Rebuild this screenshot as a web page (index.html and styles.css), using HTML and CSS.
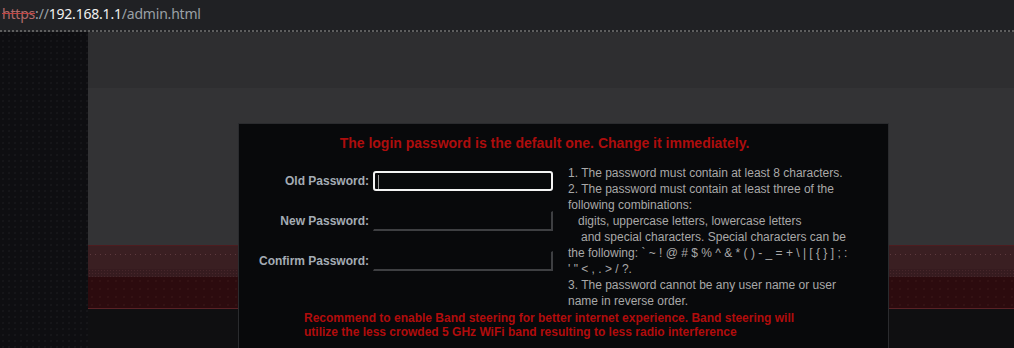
FILE: index.html
```html
<!DOCTYPE html>
<html>
<head>
<meta charset="utf-8">
<link rel="stylesheet" href="styles.css">
</head>
<body>
<div class="urlbar">
  <span class="scheme">https</span><span class="dim">://</span><span class="host">192.168.1.1</span><span class="dim">/admin.html</span>
</div>
<div class="page">
  <div class="sidebar"></div>
  <div class="content">
    <div class="band band-top"></div>
    <div class="band band-mid"></div>
    <div class="band band-red">
      <div class="red-upper"></div>
      <div class="red-dots"></div>
      <div class="red-lower"></div>
    </div>
    <div class="band band-bottom"></div>
  </div>
  <div class="modal">
    <div class="title">The login password is the default one. Change it immediately.</div>
    <div class="form">
      <div class="fields">
        <div class="row">
          <label class="label">Old Password:</label>
          <div class="input focused"><span class="caret"></span></div>
        </div>
        <div class="row">
          <label class="label">New Password:</label>
          <div class="input"></div>
        </div>
        <div class="row">
          <label class="label">Confirm Password:</label>
          <div class="input"></div>
        </div>
      </div>
      <div class="rules">
        1. The password must contain at least 8 characters.<br>
        2. The password must contain at least three of the following combinations:<br>
        <span class="ind1">digits, uppercase letters, lowercase letters</span><br>
        <span class="ind2">and special characters. Special characters can be the following: ` ~ ! @ # $ % ^ &amp; * ( ) - _ = + \ | [ { } ] ; : ' " &lt; , . &gt; / ?.</span><br>
        3. The password cannot be any user name or user name in reverse order.
      </div>
    </div>
    <div class="notice">Recommend to enable Band steering for better internet experience. Band steering will utilize the less crowded 5 GHz WiFi band resulting to less radio interference</div>
  </div>
</div>
</body>
</html>
```
FILE: styles.css
```css
html, body {
  margin: 0;
  padding: 0;
  background: #0f0f12;
  overflow: hidden;
}
body {
  width: 1014px;
  height: 348px;
  font-family: "Liberation Sans", Arial, sans-serif;
}
.urlbar {
  height: 32px;
  background: #202124;
  border-bottom: 2px dotted #5e5e5e;
  box-sizing: border-box;
  padding-left: 2px;
  font-family: "Noto Sans", "Open Sans", sans-serif;
  font-size: 14px;
  line-height: 28px;
  letter-spacing: -0.2px;
  color: #9aa0a6;
  white-space: nowrap;
}
.scheme {
  color: #b36a6a;
  text-decoration: line-through;
  text-decoration-color: #c04040;
}
.host { color: #f0f0f0; }
.dim { color: #9aa0a6; }

.page {
  position: relative;
  display: flex;
  height: 316px;
}
.sidebar {
  width: 88px;
  flex: none;
  background-color: #0e0e11;
  background-image: radial-gradient(circle, #1d1d22 0.6px, transparent 0.8px);
  background-size: 6px 6px;
}
.content {
  flex: 1;
  display: flex;
  flex-direction: column;
}
.band-top {
  height: 56px;
  background: #2e2e30;
}
.band-mid {
  height: 157px;
  background: #333335;
}
.band-red {
  height: 64px;
  display: flex;
  flex-direction: column;
  border-top: 1px solid #4d1c1f;
  border-bottom: 1px solid #5a2226;
  box-sizing: border-box;
}
.red-upper {
  height: 23px;
  background-color: #3a1f22;
  background-image: radial-gradient(circle, #5e3a3f 0.5px, transparent 0.8px);
  background-size: 5px 23px;
  background-position: 0 -3px;
}
.red-dots {
  height: 8px;
  background-color: #361b1f;
  background-image: radial-gradient(circle, #47262a 0.6px, transparent 0.9px);
  background-size: 3px 3px;
}
.red-lower {
  flex: 1;
  background-color: #2c0b0e;
  background-image: radial-gradient(circle, #46201f 0.5px, transparent 0.8px);
  background-size: 8px 8px;
}
.band-bottom {
  flex: 1;
  background: #0f0f11;
}

.modal {
  position: absolute;
  left: 238px;
  top: 91px;
  width: 651px;
  bottom: 0;
  box-sizing: border-box;
  background: #08090b;
  border: 1px solid #2a2b2e;
  border-bottom: none;
  padding-top: 11px;
}
.title {
  text-align: center;
  color: #ad0d0d;
  font-weight: bold;
  font-size: 14px;
  line-height: 16px;
  padding-right: 38px;
}
.form {
  display: flex;
  margin-top: 14px;
}
.fields {
  display: flex;
  flex-direction: column;
  gap: 20px;
  padding-top: 6px;
  width: 329px;
  flex: none;
}
.row {
  display: flex;
  align-items: center;
  height: 20px;
}
.label {
  width: 134px;
  flex: none;
  text-align: right;
  padding-right: 4px;
  box-sizing: border-box;
  color: #a4acb4;
  font-weight: bold;
  font-size: 12px;
}
.input {
  width: 180px;
  height: 20px;
  box-sizing: border-box;
  border-style: solid;
  border-width: 2px;
  border-color: #08090b #3e3f42 #3e3f42 #08090b;
  border-top-width: 1px;
  border-left-width: 1px;
}
.input.focused {
  border: 2px solid #f4f4f4;
  border-radius: 3px;
  padding: 2px 3px;
}
.caret {
  display: block;
  width: 1px;
  height: 14px;
  background: #9a9a9a;
}
.rules {
  width: 282px;
  color: #a8a8a8;
  font-size: 12px;
  line-height: 16px;
}
.ind1 { padding-left: 10px; }
.ind2 { padding-left: 13px; }
.notice {
  margin: 2px 0 0 65px;
  width: 500px;
  color: #b10c0c;
  font-weight: bold;
  font-size: 12px;
  line-height: 14px;
}
```
